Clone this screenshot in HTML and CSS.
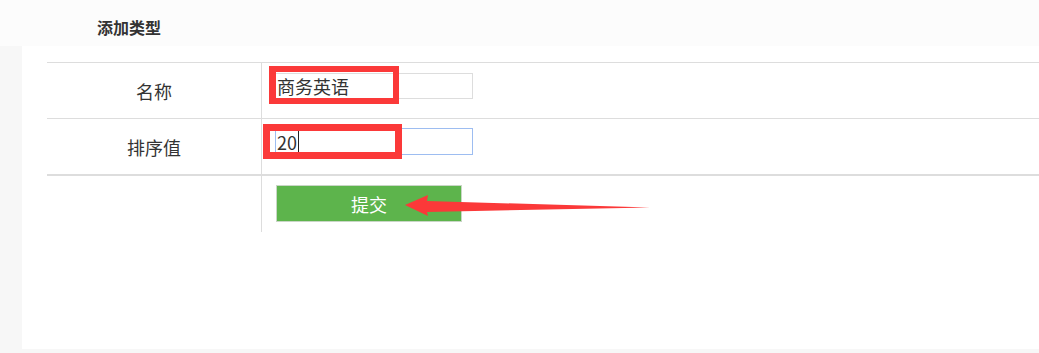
FILE: index.html
```html
<!DOCTYPE html>
<html lang="zh">
<head>
<meta charset="utf-8">
<title>添加类型</title>
<link rel="stylesheet" href="styles.css">
</head>
<body>
<div class="header"><span class="title">添加类型</span></div>
<div class="main">
  <div class="form">
    <div class="row">
      <div class="label">名称</div>
      <div class="cell"><div class="field">商务英语</div></div>
    </div>
    <div class="row row-last">
      <div class="label">排序值</div>
      <div class="cell"><div class="field focused">20<span class="caret"></span></div></div>
    </div>
    <div class="row row-action">
      <div class="label"></div>
      <div class="cell cell-action"><button class="btn" type="button">提交</button></div>
    </div>
  </div>
</div>
<div class="mark mark-1"></div>
<div class="mark mark-2"></div>
<svg class="arrow" width="1039" height="353" viewBox="0 0 1039 353">
  <polygon points="405,205 428,195 427,201 650,207.5 427,212 428,216" fill="#fb3939"/>
</svg>
</body>
</html>
```
FILE: styles.css
```css
html, body {
  margin: 0;
  padding: 0;
}
body {
  width: 1039px;
  height: 353px;
  background: #f7f7f7;
  font-family: "Microsoft YaHei", "Noto Sans CJK SC", "Liberation Sans", sans-serif;
  color: #333;
  position: relative;
  overflow: hidden;
}
.header {
  height: 46px;
  background: #fcfcfc;
  box-sizing: border-box;
  padding: 9px 0 0 97px;
}
.title {
  font-size: 16px;
  font-weight: bold;
  line-height: 36px;
  color: #333;
}
.main {
  margin-left: 22px;
  height: 303px;
  background: #fff;
  box-sizing: border-box;
  padding: 16px 0 0 25px;
}
.form {
  border-top: 1px solid #dddddd;
}
.row {
  display: grid;
  grid-template-columns: 215px 1fr;
  height: 55px;
  border-bottom: 1px solid #dddddd;
}
.row-last {
  border-bottom: 2px solid #dddddd;
}
.row-action {
  height: 56px;
  border-bottom: none;
}
.label {
  border-right: 1px solid #dddddd;
  display: flex;
  align-items: center;
  justify-content: center;
  font-size: 18px;
  padding-top: 1px;
}
.cell {
  padding: 10px 0 0 13px;
}
.field {
  width: 198px;
  height: 26px;
  box-sizing: border-box;
  border: 1px solid #dddddd;
  font-size: 18px;
  line-height: 24px;
  padding-left: 1px;
  color: #333;
  display: flex;
  align-items: center;
}
.focused {
  border-color: #9dbdf1;
  height: 27px;
  margin-top: -1px;
}
.caret {
  display: inline-block;
  width: 1px;
  height: 21px;
  background: #222;
  margin-left: 1px;
}
.cell-action {
  padding: 9px 0 0 14px;
}
.btn {
  width: 186px;
  height: 37px;
  background: #5db44c;
  border: 1px solid #c9d6c6;
  color: #fff;
  font-family: "Microsoft YaHei", "Noto Sans CJK SC", sans-serif;
  font-size: 18px;
  padding: 0;
  display: flex;
  align-items: center;
  justify-content: center;
}
.mark {
  position: absolute;
  border: 7px solid #fb3939;
  box-sizing: border-box;
}
.mark-1 {
  left: 269px;
  top: 66px;
  width: 130px;
  height: 38px;
  border-width: 6px 6px 6px 7px;
}
.mark-2 {
  left: 263px;
  top: 124px;
  width: 139px;
  height: 35px;
}
.arrow {
  position: absolute;
  left: 0;
  top: 0;
}
```
